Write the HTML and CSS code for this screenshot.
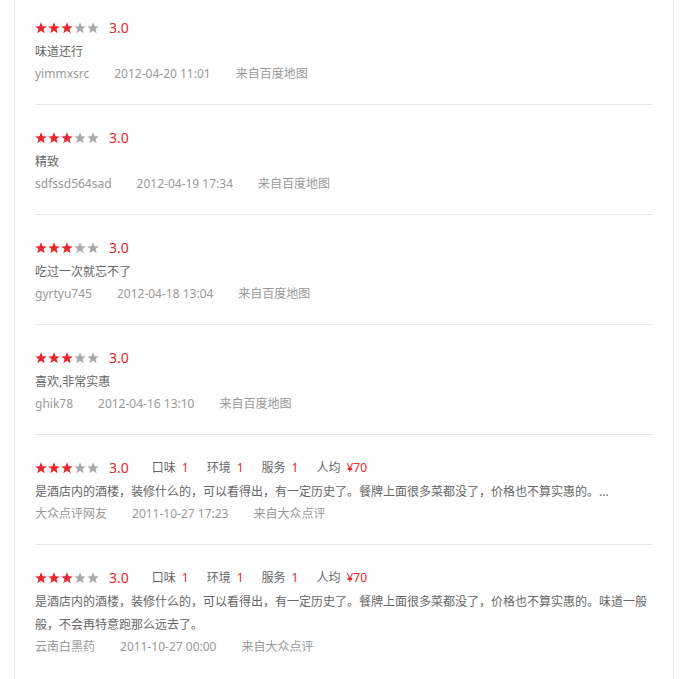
FILE: index.html
```html
<!DOCTYPE html>
<html lang="zh-CN">
<head>
  <meta charset="UTF-8">
  <meta name="viewport" content="width=device-width, initial-scale=1.0">
  <title>评论</title>
  <link rel="stylesheet" href="styles.css">
</head>
<body>
  <svg width="0" height="0" class="defs">
    <defs>
      <polygon id="star" points="6,0.3 7.6,4.3 11.8,4.4 8.5,7 9.7,11.2 6,8.8 2.3,11.2 3.5,7 0.2,4.4 4.4,4.3"/>
    </defs>
  </svg>
  <div class="panel">
    <ul class="comments">
      <li class="comment">
        <div class="rate">
          <span class="stars"><svg viewBox="0 0 12 12" class="on"><use href="#star"/></svg><svg viewBox="0 0 12 12" class="on"><use href="#star"/></svg><svg viewBox="0 0 12 12" class="on"><use href="#star"/></svg><svg viewBox="0 0 12 12"><use href="#star"/></svg><svg viewBox="0 0 12 12"><use href="#star"/></svg></span>
          <span class="score">3.0</span>
        </div>
        <p class="text">味道还行</p>
        <div class="meta"><span>yimmxsrc</span><span>2012-04-20 11:01</span><span>来自百度地图</span></div>
      </li>
      <li class="comment">
        <div class="rate">
          <span class="stars"><svg viewBox="0 0 12 12" class="on"><use href="#star"/></svg><svg viewBox="0 0 12 12" class="on"><use href="#star"/></svg><svg viewBox="0 0 12 12" class="on"><use href="#star"/></svg><svg viewBox="0 0 12 12"><use href="#star"/></svg><svg viewBox="0 0 12 12"><use href="#star"/></svg></span>
          <span class="score">3.0</span>
        </div>
        <p class="text">精致</p>
        <div class="meta"><span>sdfssd564sad</span><span>2012-04-19 17:34</span><span>来自百度地图</span></div>
      </li>
      <li class="comment">
        <div class="rate">
          <span class="stars"><svg viewBox="0 0 12 12" class="on"><use href="#star"/></svg><svg viewBox="0 0 12 12" class="on"><use href="#star"/></svg><svg viewBox="0 0 12 12" class="on"><use href="#star"/></svg><svg viewBox="0 0 12 12"><use href="#star"/></svg><svg viewBox="0 0 12 12"><use href="#star"/></svg></span>
          <span class="score">3.0</span>
        </div>
        <p class="text">吃过一次就忘不了</p>
        <div class="meta"><span>gyrtyu745</span><span>2012-04-18 13:04</span><span>来自百度地图</span></div>
      </li>
      <li class="comment">
        <div class="rate">
          <span class="stars"><svg viewBox="0 0 12 12" class="on"><use href="#star"/></svg><svg viewBox="0 0 12 12" class="on"><use href="#star"/></svg><svg viewBox="0 0 12 12" class="on"><use href="#star"/></svg><svg viewBox="0 0 12 12"><use href="#star"/></svg><svg viewBox="0 0 12 12"><use href="#star"/></svg></span>
          <span class="score">3.0</span>
        </div>
        <p class="text">喜欢,非常实惠</p>
        <div class="meta"><span>ghik78</span><span>2012-04-16 13:10</span><span>来自百度地图</span></div>
      </li>
      <li class="comment">
        <div class="rate">
          <span class="stars"><svg viewBox="0 0 12 12" class="on"><use href="#star"/></svg><svg viewBox="0 0 12 12" class="on"><use href="#star"/></svg><svg viewBox="0 0 12 12" class="on"><use href="#star"/></svg><svg viewBox="0 0 12 12"><use href="#star"/></svg><svg viewBox="0 0 12 12"><use href="#star"/></svg></span>
          <span class="score">3.0</span>
          <span class="item">口味<em>1</em></span>
          <span class="item">环境<em>1</em></span>
          <span class="item">服务<em>1</em></span>
          <span class="item">人均<em>¥70</em></span>
        </div>
        <p class="text">是酒店内的酒楼，装修什么的，可以看得出，有一定历史了。餐牌上面很多菜都没了，价格也不算实惠的。...</p>
        <div class="meta"><span>大众点评网友</span><span>2011-10-27 17:23</span><span>来自大众点评</span></div>
      </li>
      <li class="comment">
        <div class="rate">
          <span class="stars"><svg viewBox="0 0 12 12" class="on"><use href="#star"/></svg><svg viewBox="0 0 12 12" class="on"><use href="#star"/></svg><svg viewBox="0 0 12 12" class="on"><use href="#star"/></svg><svg viewBox="0 0 12 12"><use href="#star"/></svg><svg viewBox="0 0 12 12"><use href="#star"/></svg></span>
          <span class="score">3.0</span>
          <span class="item">口味<em>1</em></span>
          <span class="item">环境<em>1</em></span>
          <span class="item">服务<em>1</em></span>
          <span class="item">人均<em>¥70</em></span>
        </div>
        <p class="text">是酒店内的酒楼，装修什么的，可以看得出，有一定历史了。餐牌上面很多菜都没了，价格也不算实惠的。味道一般般，不会再特意跑那么远去了。</p>
        <div class="meta"><span>云南白黑药</span><span>2011-10-27 00:00</span><span>来自大众点评</span></div>
      </li>
    </ul>
  </div>
</body>
</html>
```

FILE: styles.css
```css
body {
  margin: 0;
  padding: 0;
  background: #fff;
  font-family: "Noto Sans", "Noto Sans CJK SC", sans-serif;
  font-size: 12px;
  color: #666;
}
.defs {
  position: absolute;
}
.panel {
  width: 660px;
  min-height: 679px;
  margin-left: 14px;
  padding: 4px 20px 0 20px;
  box-sizing: border-box;
  border-left: 1px solid #e5e5e5;
  border-right: 1px solid #e5e5e5;
}
.comments {
  list-style: none;
  margin: 0;
  padding: 0;
}
.comment {
  padding: 11px 0 20px;
  border-bottom: 1px solid #e6e6e6;
}
.comment + .comment {
  padding-top: 20px;
}
.comment:last-child {
  border-bottom: none;
}
.rate,
.text,
.meta {
  line-height: 23px;
  margin: 0;
}
.rate {
  display: flex;
  align-items: center;
  height: 25px;
}
.meta {
  line-height: 21px;
  color: #999;
}
.stars {
  display: flex;
  gap: 1px;
  margin-right: 10px;
}
.stars svg {
  width: 12px;
  height: 12px;
  fill: #a9a9a9;
}
.stars svg.on {
  fill: #e8262c;
}
.score {
  font-size: 14px;
  color: #e8262c;
  margin-right: 23px;
}
.item {
  margin-right: 18px;
}
.item em {
  font-style: normal;
  color: #e8262c;
  margin-left: 6px;
}
.meta span {
  margin-right: 25px;
}
```
